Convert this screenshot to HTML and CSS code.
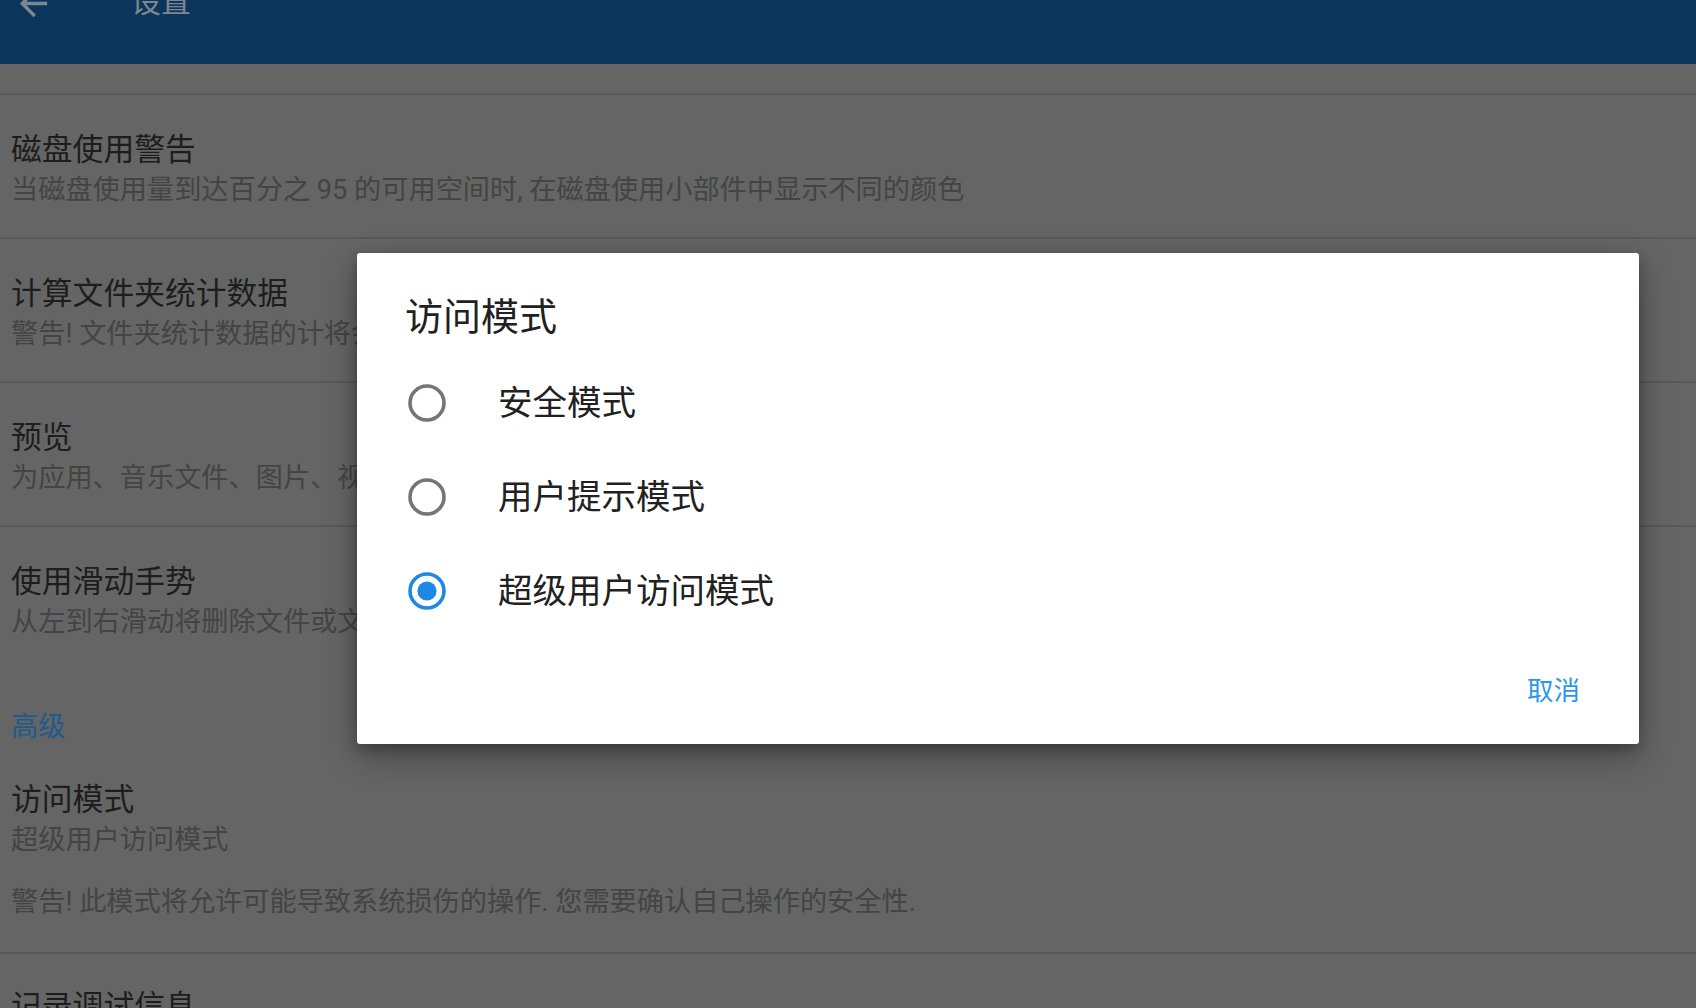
FILE: index.html
```html
<!DOCTYPE html>
<html lang="zh-CN">
<head>
<meta charset="utf-8">
<title>设置</title>
<link rel="stylesheet" href="styles.css">
</head>
<body>
<div class="screen">
  <header class="appbar">
    <svg class="back" viewBox="0 0 24 24" aria-hidden="true"><path d="M20 11H7.83l5.59-5.59L12 4l-8 8 8 8 1.41-1.41L7.83 13H20v-2z"/></svg>
    <span class="appbar-title">设置</span>
  </header>

  <main class="list">
    <div class="tail"></div>
    <div class="divider"></div>
    <div class="pref">
      <div class="pref-title">磁盘使用警告</div>
      <div class="pref-summary">当磁盘使用量到达百分之 95 的可用空间时, 在磁盘使用小部件中显示不同的颜色</div>
    </div>
    <div class="divider"></div>
    <div class="pref">
      <div class="pref-title">计算文件夹统计数据</div>
      <div class="pref-summary">警告! 文件夹统计数据的计将会</div>
    </div>
    <div class="divider"></div>
    <div class="pref">
      <div class="pref-title">预览</div>
      <div class="pref-summary">为应用、音乐文件、图片、视</div>
    </div>
    <div class="divider"></div>
    <div class="pref">
      <div class="pref-title">使用滑动手势</div>
      <div class="pref-summary">从左到右滑动将删除文件或文</div>
    </div>

    <div class="category">高级</div>
    <div class="pref pref-last">
      <div class="pref-title">访问模式</div>
      <div class="pref-summary">超级用户访问模式</div>
      <div class="pref-summary pref-warning">警告! 此模式将允许可能导致系统损伤的操作. 您需要确认自己操作的安全性.</div>
    </div>
    <div class="divider"></div>
    <div class="pref pref-next">
      <div class="pref-title">记录调试信息</div>
    </div>
  </main>

  <div class="dialog" role="dialog">
    <div class="dialog-title">访问模式</div>
    <div class="options">
      <div class="option">
        <svg class="radio" viewBox="0 0 38 38"><circle cx="19" cy="19" r="17" class="ring"/></svg>
        <span class="option-label">安全模式</span>
      </div>
      <div class="option">
        <svg class="radio" viewBox="0 0 38 38"><circle cx="19" cy="19" r="17" class="ring"/></svg>
        <span class="option-label">用户提示模式</span>
      </div>
      <div class="option">
        <svg class="radio checked" viewBox="0 0 38 38"><circle cx="19" cy="19" r="17" class="ring"/><circle cx="19" cy="19" r="9.6" class="dot"/></svg>
        <span class="option-label">超级用户访问模式</span>
      </div>
    </div>
    <div class="actions">
      <span class="btn">取消</span>
    </div>
  </div>
</div>
</body>
</html>
```
FILE: styles.css
```css
html, body {
  margin: 0;
  padding: 0;
}
body {
  width: 1696px;
  height: 1008px;
  overflow: hidden;
  background: #656565;
  font-family: Roboto, "Noto Sans CJK SC", sans-serif;
}
.screen {
  position: relative;
  width: 1696px;
  height: 1008px;
  overflow: hidden;
}

/* App bar (scrolled partly out of view) */
.appbar {
  height: 64px;
  background: #0c355b;
  display: flex;
  align-items: flex-start;
  padding-left: 13px;
  overflow: hidden;
  box-sizing: border-box;
}
.back {
  width: 41px;
  height: 41px;
  margin-top: -17px;
  fill: #7c8792;
  flex: none;
}
.appbar-title {
  margin-left: 77px;
  margin-top: -18px;
  font-size: 30px;
  line-height: 40px;
  color: #7c8792;
}

/* Preference list */
.list {
  display: flex;
  flex-direction: column;
}
.tail {
  height: 29px;
}
.divider {
  height: 2px;
  background: #595959;
}
.pref {
  padding: 34px 11px 28px 11px;
}
.pref-title {
  font-size: 30.8px;
  line-height: 42px;
  color: #1d1d1d;
  white-space: nowrap;
}
.pref-summary {
  font-size: 27.2px;
  line-height: 38px;
  color: #444444;
  white-space: nowrap;
}
.pref-warning {
  margin-top: 24px;
}
.pref-last {
  padding-top: 32px;
  padding-bottom: 31px;
}
.pref-next {
  padding-top: 32px;
}
.category {
  padding: 38px 11px 0 11px;
  font-size: 27.2px;
  line-height: 40px;
  color: #1d5a8f;
}

/* Dialog */
.dialog {
  position: absolute;
  left: 357px;
  top: 253px;
  width: 1282px;
  height: 491px;
  box-sizing: border-box;
  background: #ffffff;
  border-radius: 3px;
  padding: 39px 59px 17px 48px;
  display: flex;
  flex-direction: column;
  box-shadow: 0 12px 34px rgba(0, 0, 0, 0.32), 0 5px 12px rgba(0, 0, 0, 0.22);
}
.dialog-title {
  font-size: 38px;
  line-height: 50px;
  color: #212121;
}
.options {
  margin-top: 14px;
  display: flex;
  flex-direction: column;
}
.option {
  height: 94px;
  display: flex;
  align-items: center;
}
.radio {
  width: 38px;
  height: 38px;
  margin-left: 3px;
  flex: none;
}
.radio .ring {
  fill: none;
  stroke: #757575;
  stroke-width: 3.6;
}
.radio.checked .ring {
  stroke: #1e88e5;
}
.radio .dot {
  fill: #1e88e5;
}
.option-label {
  margin-left: 52px;
  font-size: 34.5px;
  line-height: 48px;
  color: #212121;
}
.actions {
  margin-top: auto;
  height: 72px;
  display: flex;
  justify-content: flex-end;
  align-items: center;
}
.btn {
  font-size: 26.5px;
  line-height: 40px;
  color: #2a96ee;
}
```
